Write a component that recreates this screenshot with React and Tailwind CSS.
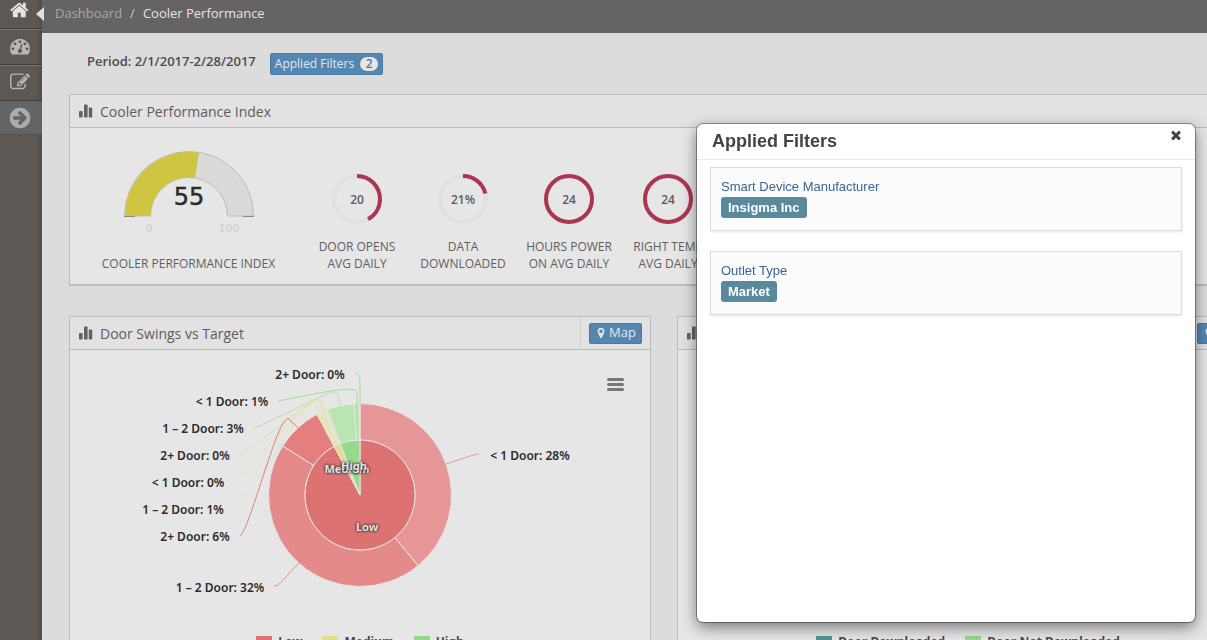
import React from "react";

const ICONS = {
  home: "M1408 992v480q0 26-19 45t-45 19h-384v-384h-256v384h-384q-26 0-45-19t-19-45v-480q0-1 .5-3t.5-3l575-474 575 474q1 2 1 6zm223-69l-62 74q-8 9-21 11h-3q-13 0-21-7l-692-577-692 577q-12 8-24 7-13-2-21-11l-62-74q-8-10-7-23.5t11-21.5l719-599q32-26 76-26t76 26l244 204v-195q0-14 9-23t23-9h192q14 0 23 9t9 23v408l219 182q10 8 11 21.5t-7 23.5z",
  dashboard:
    "M384 1152q0-53-37.5-90.5t-90.5-37.5-90.5 37.5-37.5 90.5 37.5 90.5 90.5 37.5 90.5-37.5 37.5-90.5zm192-448q0-53-37.5-90.5t-90.5-37.5-90.5 37.5-37.5 90.5 37.5 90.5 90.5 37.5 90.5-37.5 37.5-90.5zm428 481l101-382q6-26-7.5-48.5t-38.5-29.5-48 6.5-30 39.5l-101 382q-60 5-107 43.5t-63 98.5q-20 77 20 146t117 89 146-20 89-117q16-60-6-117t-72-91zm660-33q0-53-37.5-90.5t-90.5-37.5-90.5 37.5-37.5 90.5 37.5 90.5 90.5 37.5 90.5-37.5 37.5-90.5zm-640-640q0-53-37.5-90.5t-90.5-37.5-90.5 37.5-37.5 90.5 37.5 90.5 90.5 37.5 90.5-37.5 37.5-90.5zm448 192q0-53-37.5-90.5t-90.5-37.5-90.5 37.5-37.5 90.5 37.5 90.5 90.5 37.5 90.5-37.5 37.5-90.5zm320 448q0 261-141 483-19 29-54 29h-1402q-35 0-54-29-141-221-141-483 0-182 71-348t191-286 286-191 348-71 348 71 286 191 191 286 71 348z",
  edit: "M888 1184l116-116-152-152-116 116v56h96v96h56zm440-720q-16-16-33 1l-350 350q-17 17-1 33t33-1l350-350q17-17 1-33zm80 594v190q0 119-84.5 203.5t-203.5 84.5h-832q-119 0-203.5-84.5t-84.5-203.5v-832q0-119 84.5-203.5t203.5-84.5h832q63 0 117 25 15 7 18 23 3 17-9 29l-49 49q-14 14-32 8-23-6-45-6h-832q-66 0-113 47t-47 113v832q0 66 47 113t113 47h832q66 0 113-47t47-113v-126q0-13 9-22l64-64q15-15 35-7t20 29zm-96-738l288 288-672 672h-288v-288zm444 132l-92 92-288-288 92-92q28-28 68-28t68 28l152 152q28 28 28 68t-28 68z",
  arrow:
    "M1413 896q0-27-18-45l-453-453q-18-18-45-18t-45 18l-91 91q-18 18-18 45t18 45l189 189h-502q-26 0-45 19t-19 45v128q0 26 19 45t45 19h502l-189 189q-18 18-18 45t18 45l91 91q18 18 45 18t45-18l453-453q18-18 18-45zm251 0q0 209-103 385.5t-279.5 279.5-385.5 103-385.5-103-279.5-279.5-103-385.5 103-385.5 279.5-279.5 385.5-103 385.5 103 279.5 279.5 103 385.5z",
  marker:
    "M1152 640q0-106-75-181t-181-75-181 75-75 181 75 181 181 75 181-75 75-181zm256 0q0 109-33 179l-364 774q-16 33-47.5 52t-67.5 19-67.5-19-46.5-52l-365-774q-33-70-33-179 0-212 150-362t362-150 362 150 150 362z",
  times:
    "M1490 1322q0 40-28 68l-136 136q-28 28-68 28t-68-28l-294-294-294 294q-28 28-68 28t-68-28l-136-136q-28-28-28-68t28-68l294-294-294-294q-28-28-28-68t28-68l136-136q28-28 68-28t68 28l294 294 294-294q28-28 68-28t68 28l136 136q28 28 28 68t-28 68l-294 294 294 294q28 28 28 68z",
};

function Icon({ name, className }) {
  return (
    <svg viewBox="0 0 1792 1792" fill="currentColor" aria-hidden="true" className={className}>
      <path d={ICONS[name]} />
    </svg>
  );
}

function BarsIcon() {
  return (
    <svg viewBox="0 0 14 14" fill="#636066" aria-hidden="true" className="size-3.5 shrink-0">
      <rect x="0" y="7" width="3.6" height="6.5" rx="0.8" />
      <rect x="5" y="0.5" width="3.6" height="13" rx="0.8" />
      <rect x="9.8" y="3.5" width="3.4" height="10" rx="0.8" />
    </svg>
  );
}

// Angles are in degrees, clockwise from twelve o'clock.
function point(cx, cy, r, deg) {
  const a = ((deg - 90) * Math.PI) / 180;
  return `${(cx + r * Math.cos(a)).toFixed(2)} ${(cy + r * Math.sin(a)).toFixed(2)}`;
}

function sector(cx, cy, r0, r1, a, b) {
  const large = b - a > 180 ? 1 : 0;
  const outer = `M${point(cx, cy, r1, a)}A${r1} ${r1} 0 ${large} 1 ${point(cx, cy, r1, b)}`;
  if (r0 === 0) return `${outer}L${cx} ${cy}Z`;
  return `${outer}L${point(cx, cy, r0, b)}A${r0} ${r0} 0 ${large} 0 ${point(cx, cy, r0, a)}Z`;
}

function Sidebar() {
  const item = "flex items-center justify-center border-b border-[#3f3b38]";
  return (
    <nav className="w-[42px] shrink-0 bg-linear-to-r from-[#5d5854] from-85% to-[#524d49] text-[#b9b6b3]">
      <a href="#home" aria-label="Home" className={`${item} h-[29px] pr-0.5 pb-2 text-[#e4e4e4]`}>
        <Icon name="home" className="size-5" />
      </a>
      <a href="#dashboard" aria-label="Dashboard" className={`${item} h-9 border-t border-t-[#77726e] pr-0.5 pb-0.5`}>
        <Icon name="dashboard" className="size-5" />
      </a>
      <a href="#edit" aria-label="Edit" className={`${item} h-9 border-t border-t-[#77726e] pr-0.5 pb-0.5`}>
        <Icon name="edit" className="size-5" />
      </a>
      <a href="#next" aria-label="Next" className="flex h-[34px] items-center justify-center border-b border-[#55514e] bg-[#646464] pr-0.5 text-[#ababab]">
        <Icon name="arrow" className="size-6" />
      </a>
    </nav>
  );
}

function PanelHeader({ title, children }) {
  return (
    <header className="flex h-[33px] items-center border-b border-[#bababa] bg-[#e2e2e2] pl-[9px]">
      <BarsIcon />
      <h2 className="ml-[7px] grow pt-0.5 text-sm text-[#5c5c5c]">{title}</h2>
      {children}
    </header>
  );
}

function MapButton() {
  return (
    <div className="flex h-full items-center border-l border-[#cfcfcf] px-2">
      <button type="button" className="flex h-[21px] w-[53px] items-center justify-center gap-0.5 rounded-xs border border-[#4a7aa6] bg-[#5486b2] text-[13px] text-[#e6e6e6]">
        <Icon name="marker" className="size-3" />
        Map
      </button>
    </div>
  );
}

function Gauge() {
  return (
    <svg viewBox="0 0 132 86" className="h-[86px] w-[132px]" role="img" aria-label="55 of 100">
      <path d={sector(66, 66, 38.5, 64.5, -90, 90)} fill="#dadada" stroke="#bcbcbc" />
      <path d={sector(66, 66, 38.5, 64, -90, 9)} fill="#d0c443" />
      <path d="M1 66.5h11M120 66.5h11" stroke="#8a8a8a" />
      <text x="66" y="55" textAnchor="middle" fontSize="24" fill="#2b2b2b" stroke="#2b2b2b" strokeWidth="0.5" fontFamily="'DejaVu Sans', sans-serif">55</text>
      <text x="26" y="82" textAnchor="middle" fontSize="11" fill="#cbcbcb" fontFamily="'DejaVu Sans', sans-serif">0</text>
      <text x="106" y="82" textAnchor="middle" fontSize="11" fill="#cbcbcb" fontFamily="'DejaVu Sans', sans-serif">100</text>
    </svg>
  );
}

function Ring({ value, share, lines }) {
  const length = 2 * Math.PI * 23;
  return (
    <div className="flex flex-col items-center">
      <svg viewBox="0 0 50 50" className="size-[50px]" role="img" aria-label={value}>
        <circle cx="25" cy="25" r="23" fill="none" stroke="#e0e0e0" strokeWidth="4" />
        <circle cx="25" cy="25" r="23" fill="none" stroke="#ac3652" strokeWidth="4" strokeDasharray={`${length * share} ${length}`} transform="rotate(-90 25 25)" />
        <text x="25" y="29.5" textAnchor="middle" fontSize="12" fontWeight="600" fill="#5c5c5c">{value}</text>
      </svg>
      <p className="mt-[14px] text-center text-xs leading-[17px] whitespace-nowrap text-[#5f5f5f] uppercase">
        {lines[0]}
        <br />
        {lines[1]}
      </p>
    </div>
  );
}

const CX = 290;
const CY = 145;

const INNER = [
  [0, 332, "#dd7272"],
  [332, 339, "#e5dc8d"],
  [339, 360, "#96d98c"],
];
const OUTER = [
  [0, 140.6, "#e69696"],
  [140.6, 302.5, "#e58a8a"],
  [302.5, 332, "#e57f7f"],
  [332, 336.8, "#e6e5b4"],
  [336.8, 337.9, "#e6e2a8"],
  [337.9, 339, "#e5df9c"],
  [339, 356.4, "#b9e6b0"],
  [356.4, 359.4, "#abe5a2"],
  [359.4, 360, "#9de394"],
];
const CONNECTORS = [
  ["M285 23C290 24 290 29 290 33V54", "#a3dc9a"],
  ["M208 51C250 43 288 34 287 43V54", "#a3dc9a"],
  ["M184 78C240 54 265 36 268 44L270 55", "#b5e0ad"],
  ["M170 105C215 75 247 43 251 49L255 61", "#e3dd98"],
  ["M164 131C205 90 243 44 249 50L253 61", "#e3dfa2"],
  ["M164 158C192 132 240 42 245 52L250 62", "#e4e1ac"],
  ["M170 186C180 180 209 60 219 69L228 78", "#e07d7d"],
  ["M204 236C210 236 214 228 229 213", "#e18a8a"],
  ["M409 104C404 104 395 108 376 114", "#e29595"],
];
const LABELS = [
  [240, 29, "2+ Door: 0%"],
  [162, 56, "< 1 Door: 1%"],
  [133, 83, "1 – 2 Door: 3%"],
  [125, 110, "2+ Door: 0%"],
  [118, 137, "< 1 Door: 0%"],
  [113, 164, "1 – 2 Door: 1%"],
  [125, 191, "2+ Door: 6%"],
  [150, 242, "1 – 2 Door: 32%"],
  [460, 110, "< 1 Door: 28%"],
];
const INNER_LABELS = [
  [297, 181, "Low"],
  [277, 123, "Medium"],
  [284, 120, "High"],
];

function DoorChart() {
  return (
    <svg viewBox="0 0 580 280" className="mx-auto block h-[280px] w-[580px]" role="img" aria-label="Door swings by share" fontSize="11" fontWeight="700" fontFamily="'Noto Sans', 'Open Sans', sans-serif">
      <g stroke="#e6e6e6" strokeWidth="1">
        {OUTER.map(([a, b, fill]) => (
          <path key={a} d={sector(CX, CY, 55, 91.5, a, b)} fill={fill} />
        ))}
        {INNER.map(([a, b, fill]) => (
          <path key={a} d={sector(CX, CY, 0, 55, a, b)} fill={fill} />
        ))}
      </g>
      <g fill="none">
        {CONNECTORS.map(([d, stroke]) => (
          <path key={d} d={d} stroke={stroke} />
        ))}
      </g>
      <g fill="#2b2b2b" textAnchor="middle" fontSize="12" fontWeight="600">
        {LABELS.map(([x, y, text]) => (
          <text key={y + text} x={x} y={y}>{text}</text>
        ))}
      </g>
      <g fill="#e6e6e6" textAnchor="middle" className="[text-shadow:0_0_3px_#222,0_0_2px_#333]">
        {INNER_LABELS.map(([x, y, text]) => (
          <text key={text} x={x} y={y}>{text}</text>
        ))}
      </g>
    </svg>
  );
}

function LegendItem({ color, children }) {
  return (
    <li className="flex items-center gap-[6px]">
      <span className={`h-3 w-4 ${color}`} />
      {children}
    </li>
  );
}

const LEGEND = "flex h-6 items-center text-xs leading-4 font-bold text-[#4a4a4a] font-['Noto_Sans','Open_Sans',sans-serif]";

function FilterCard({ label, value }) {
  return (
    <section className="h-16 border border-[#dcdcdc] bg-[#fbfbfb] px-2.5 pt-[9px] text-[13px] shadow-[0_1px_2px_rgba(0,0,0,0.1)]">
      <h3 className="leading-5 text-[#3c6494]">{label}</h3>
      <span className="inline-block rounded-[3px] bg-[#58899c] px-[7px] leading-[21px] font-bold text-white">{value}</span>
    </section>
  );
}

function FilterDialog() {
  return (
    <div role="dialog" aria-labelledby="filters-title" className="fixed top-[124px] right-3 h-[498px] w-[498px] rounded-md bg-white font-['Liberation_Sans',Arial,sans-serif] shadow-[0_0_0_1px_rgba(0,0,0,0.35),0_5px_15px_rgba(0,0,0,0.5)]">
      <header className="flex h-9 items-start justify-between border-b border-[#eaeaea] pr-3 pl-[15px]">
        <h1 id="filters-title" className="pt-1 text-lg leading-[26px] font-bold text-[#444]">Applied Filters</h1>
        <button type="button" aria-label="Close" className="pt-1 text-[#444]">
          <Icon name="times" className="size-3.5" />
        </button>
      </header>
      <div className="flex flex-col gap-5 px-[13px] pt-[7px]">
        <FilterCard label="Smart Device Manufacturer" value="Insigma Inc" />
        <FilterCard label="Outlet Type" value="Market" />
      </div>
    </div>
  );
}

export default function App() {
  return (
    <div className="flex h-screen overflow-hidden bg-[#dcdcdc] font-['Open_Sans',sans-serif] text-[13px] text-[#555]">
      <Sidebar />
      <div className="min-w-0 grow">
        <header className="relative flex h-[33px] items-center bg-[#666364] pb-1.5 pl-[13px]">
          <svg viewBox="0 0 8 14" aria-hidden="true" className="absolute top-[7px] -left-1.5 h-3.5 w-2">
            <path d="M8 0v14L0 7z" fill="#e0e0e0" />
          </svg>
          <nav aria-label="Breadcrumb" className="flex gap-2 text-[#e4e4e4]">
            <a href="#dashboard" className="text-[#aaa8a8]">Dashboard</a>
            <span className="text-[#c9c9c9]">/</span>
            <span>Cooler Performance</span>
          </nav>
        </header>

        <main className="min-w-[1217px] pl-[27px]">
          <div className="flex h-[61px] items-center gap-[14px] pl-[18px]">
            <strong className="pb-1 font-semibold text-[#4d4d4d]">Period: 2/1/2017-2/28/2017</strong>
            <button type="button" className="flex h-[22px] items-center gap-[6px] rounded-xs border border-[#4a7aa6] bg-[#5486b2] px-1 text-xs text-[#e6e6e6]">
              Applied Filters
              <span className="flex h-3.5 w-4.5 items-center justify-center rounded-full bg-[#e6e6e6] font-semibold text-[#5078a0]">2</span>
            </button>
          </div>

          <section className="border border-b-2 border-[#bdbdbd] bg-[#e6e6e6]">
            <PanelHeader title="Cooler Performance Index" />
            <div className="grid h-[156px] grid-cols-[237px_100px_112px_100px_98px] items-end pb-3">
              <div className="flex flex-col items-center">
                <Gauge />
                <p className="mt-[19px] text-xs leading-[17px] text-[#5f5f5f] uppercase">Cooler Performance Index</p>
              </div>
              <Ring value="20" share={0.417} lines={["Door Opens", "Avg Daily"]} />
              <Ring value="21%" share={0.21} lines={["Data", "Downloaded"]} />
              <Ring value="24" share={1} lines={["Hours Power", "On Avg Daily"]} />
              <Ring value="24" share={1} lines={["Right Temp", "Avg Daily"]} />
            </div>
          </section>

          <div className="mt-[30px] grid grid-cols-2 gap-[26px]">
            <section className="border border-[#bdbdbd] bg-[#e6e6e6]">
              <PanelHeader title="Door Swings vs Target">
                <MapButton />
              </PanelHeader>
              <div className="relative">
                <button type="button" aria-label="Chart menu" className="absolute top-7 right-[26px] flex w-[17px] flex-col gap-0.5">
                  <span className="h-[3px] rounded-full bg-[#777]" />
                  <span className="h-[3px] rounded-full bg-[#777]" />
                  <span className="h-[3px] rounded-full bg-[#777]" />
                </button>
                <DoorChart />
                <ul className={`${LEGEND} justify-center gap-5`}>
                  <LegendItem color="bg-[#dd7272]">Low</LegendItem>
                  <LegendItem color="bg-[#e5dc8d]">Medium</LegendItem>
                  <LegendItem color="bg-[#96d98c]">High</LegendItem>
                </ul>
              </div>
            </section>
            <section className="border border-[#bdbdbd] bg-[#e6e6e6]">
              <PanelHeader title="Data Downloaded">
                <MapButton />
              </PanelHeader>
              <ul className={`${LEGEND} mt-[280px] justify-center gap-5`}>
                <LegendItem color="bg-[#4f9796]">Door Downloaded</LegendItem>
                <LegendItem color="bg-[#96d98c]">Door Not Downloaded</LegendItem>
              </ul>
            </section>
          </div>
        </main>
      </div>
      <FilterDialog />
    </div>
  );
}
